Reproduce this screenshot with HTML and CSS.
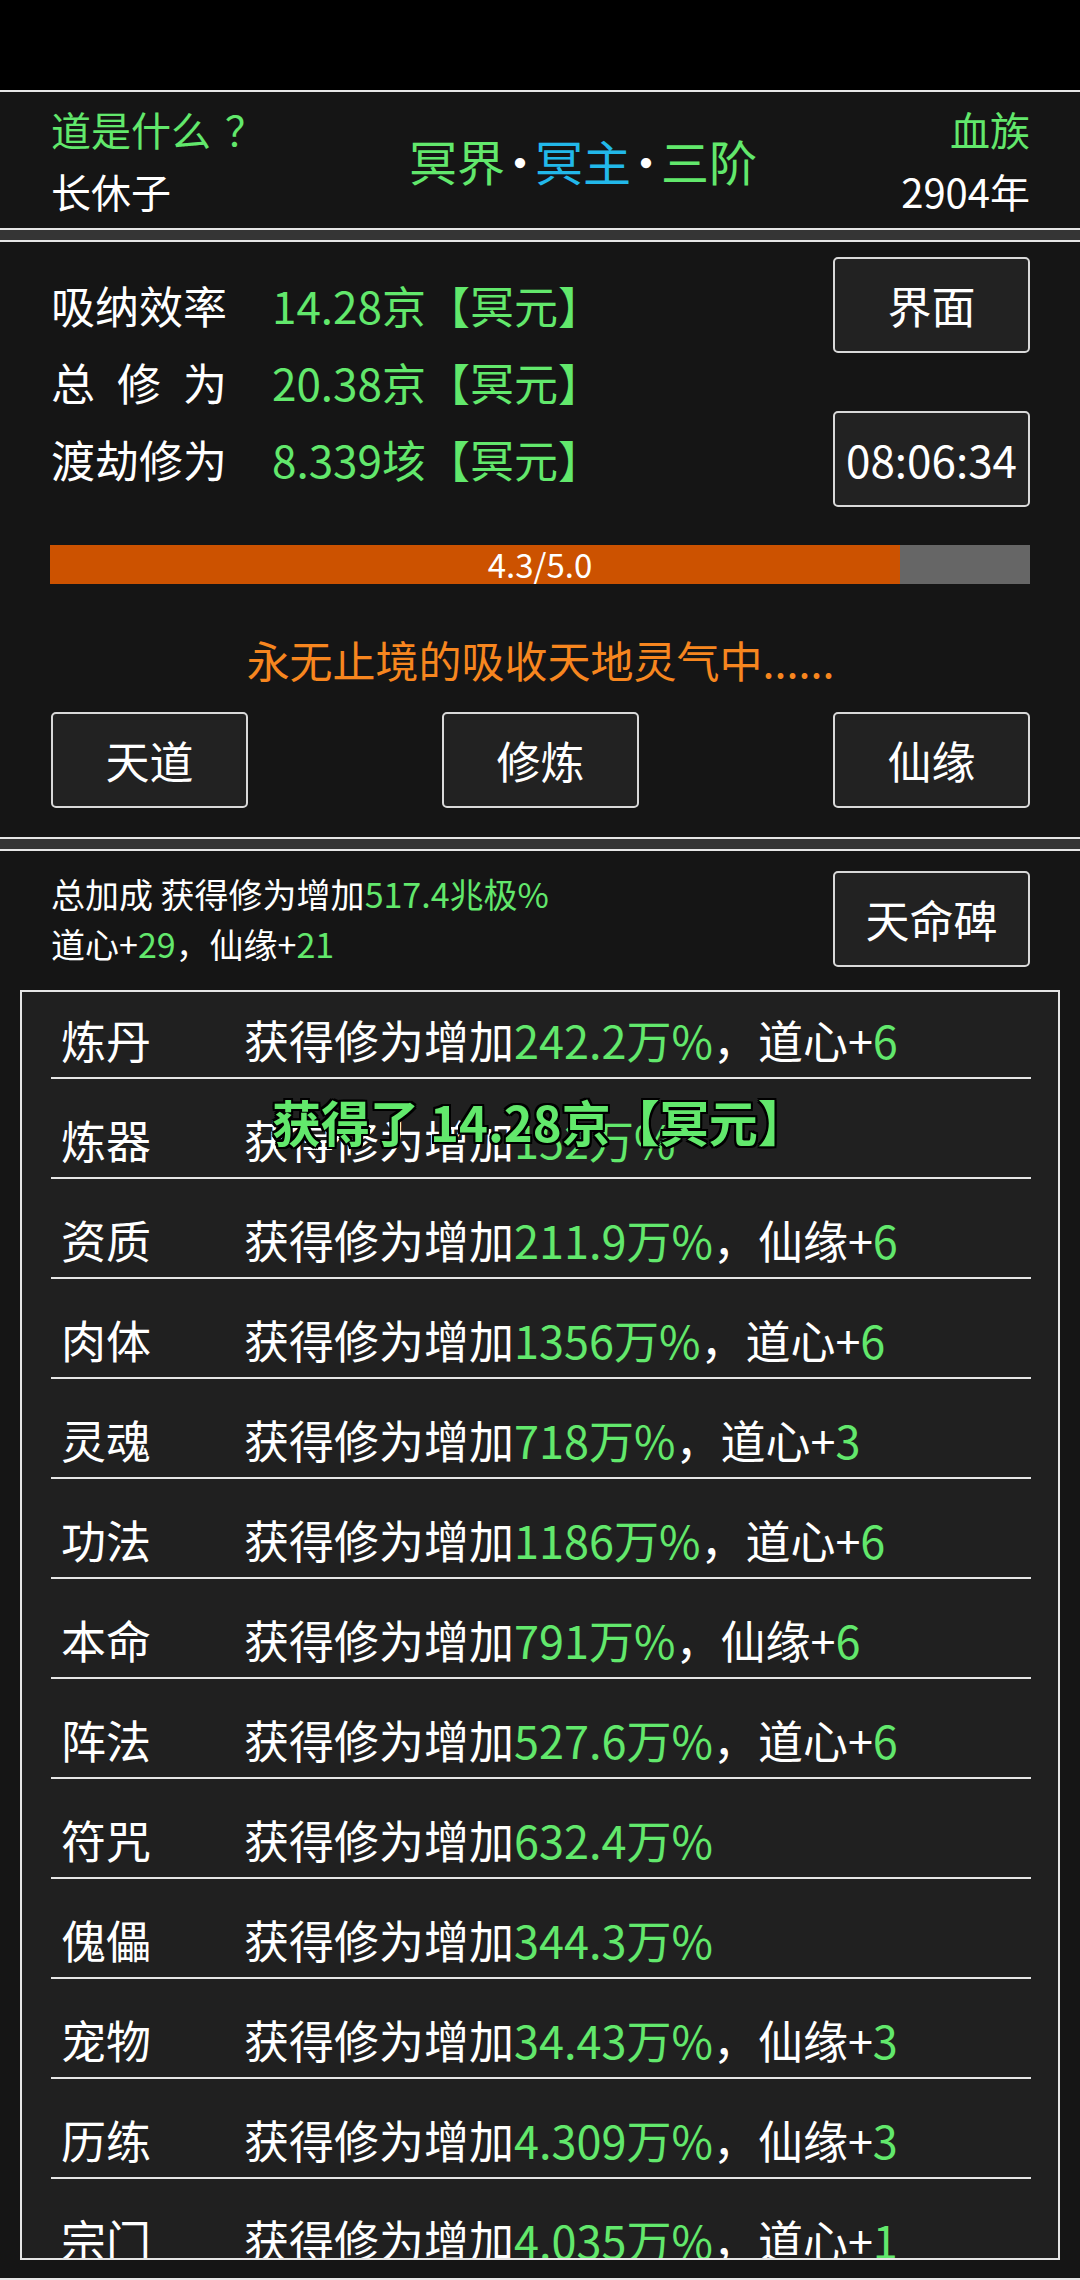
FILE: index.html
```html
<!DOCTYPE html>
<html lang="zh-CN">
<head>
<meta charset="utf-8">
<title>修仙</title>
<link rel="stylesheet" href="styles.css">
</head>
<body>
<div class="screen">
  <div class="statusbar"></div>

  <section class="panel header">
    <div class="h-side h-left">
      <div class="green">道是什么<span class="fw">？</span></div>
      <div>长休子</div>
    </div>
    <div class="h-title">
      <span class="green">冥界</span><span class="dot">·</span><span class="cyan">冥主</span><span class="dot">·</span><span class="green">三阶</span>
    </div>
    <div class="h-side h-right">
      <div class="green">血族</div>
      <div>2904年</div>
    </div>
  </section>

  <section class="panel main">
    <div class="stats-row">
      <div class="stats">
        <div class="stat"><span class="label">吸纳效率</span><span class="green">14.28京【冥元】</span></div>
        <div class="stat"><span class="label spaced">总修为</span><span class="green">20.38京【冥元】</span></div>
        <div class="stat"><span class="label">渡劫修为</span><span class="green">8.339垓【冥元】</span></div>
      </div>
      <div class="side-btns">
        <button class="btn">界面</button>
        <button class="btn">08:06:34</button>
      </div>
    </div>
    <div class="bar">
      <div class="bar-fill" style="width:86.7%"></div>
      <span class="bar-text">4.3/5.0</span>
    </div>
    <div class="status">永无止境的吸收天地灵气中......</div>
    <div class="actions">
      <button class="btn">天道</button>
      <button class="btn">修炼</button>
      <button class="btn">仙缘</button>
    </div>
  </section>

  <section class="panel bonus">
    <div class="bonus-top">
      <div class="bonus-text">
        <div>总加成 获得修为增加<span class="green">517.4兆极%</span></div>
        <div>道心+<span class="green">29</span>，仙缘+<span class="green">21</span></div>
      </div>
      <button class="btn">天命碑</button>
    </div>
    <div class="list">
      <div class="list-inner">
        <div class="row"><span class="row-label">炼丹</span><span>获得修为增加<span class="green">242.2万%</span>，道心+<span class="green">6</span></span></div>
        <div class="row"><span class="row-label">炼器</span><span>获得修为增加<span class="green">152万%</span></span></div>
        <div class="row"><span class="row-label">资质</span><span>获得修为增加<span class="green">211.9万%</span>，仙缘+<span class="green">6</span></span></div>
        <div class="row"><span class="row-label">肉体</span><span>获得修为增加<span class="green">1356万%</span>，道心+<span class="green">6</span></span></div>
        <div class="row"><span class="row-label">灵魂</span><span>获得修为增加<span class="green">718万%</span>，道心+<span class="green">3</span></span></div>
        <div class="row"><span class="row-label">功法</span><span>获得修为增加<span class="green">1186万%</span>，道心+<span class="green">6</span></span></div>
        <div class="row"><span class="row-label">本命</span><span>获得修为增加<span class="green">791万%</span>，仙缘+<span class="green">6</span></span></div>
        <div class="row"><span class="row-label">阵法</span><span>获得修为增加<span class="green">527.6万%</span>，道心+<span class="green">6</span></span></div>
        <div class="row"><span class="row-label">符咒</span><span>获得修为增加<span class="green">632.4万%</span></span></div>
        <div class="row"><span class="row-label">傀儡</span><span>获得修为增加<span class="green">344.3万%</span></span></div>
        <div class="row"><span class="row-label">宠物</span><span>获得修为增加<span class="green">34.43万%</span>，仙缘+<span class="green">3</span></span></div>
        <div class="row"><span class="row-label">历练</span><span>获得修为增加<span class="green">4.309万%</span>，仙缘+<span class="green">3</span></span></div>
        <div class="row"><span class="row-label">宗门</span><span>获得修为增加<span class="green">4.035万%</span>，道心+<span class="green">1</span></span></div>
      </div>
    </div>
  </section>

  <div class="toast">获得了 14.28京【冥元】</div>
</div>
</body>
</html>
```

FILE: styles.css
```css
html, body {
  margin: 0;
  padding: 0;
  background: #000;
}

body {
  font-family: "Noto Sans CJK SC", "Noto Sans", sans-serif;
  color: #fff;
}

.screen {
  position: relative;
  width: 1080px;
  height: 2280px;
  display: flex;
  flex-direction: column;
  gap: 10px;
  background: #353535;
  overflow: hidden;
}

.statusbar {
  height: 90px;
  flex: none;
  background: #000;
  margin-bottom: -10px;
}

.panel {
  background: #151515;
  border-top: 2px solid #e6e6e6;
  border-bottom: 2px solid #e6e6e6;
  flex: none;
}

.green { color: #62e86c; }
.cyan { color: #22b8ea; }

.fw {
  margin-left: 14px;
}

/* header */
.header {
  height: 136px;
  display: flex;
  align-items: center;
  padding: 0 50px 0 51px;
}

.h-side {
  font-size: 40px;
  line-height: 62px;
  white-space: nowrap;
}

.h-right { text-align: right; }

.h-title {
  flex: 1;
  text-align: center;
  font-size: 48px;
  line-height: 60px;
  white-space: nowrap;
}

.dot {
  color: #fff;
  margin: 0 -9px;
}

/* main panel */
.main {
  padding: 15px 50px 0 51px;
  box-sizing: content-box;
  height: 580px;
}

.stats-row {
  display: flex;
  justify-content: space-between;
  height: 250px;
}

.stats {
  padding-top: 10px;
}

.stat {
  font-size: 44px;
  line-height: 77px;
  white-space: nowrap;
  display: flex;
}

.label {
  width: 176px;
  margin-right: 45px;
  flex: none;
}

.label.spaced {
  letter-spacing: 22px;
}

.side-btns {
  display: flex;
  flex-direction: column;
  justify-content: space-between;
}

.btn {
  font: inherit;
  font-size: 44px;
  color: #fff;
  background: #222;
  border: 2px solid #d9d9d9;
  border-radius: 5px;
  width: 197px;
  height: 96px;
  padding: 0;
  line-height: 1;
  box-sizing: border-box;
  cursor: pointer;
}

.bar {
  position: relative;
  margin-top: 38px;
  margin-left: -1px;
  height: 39px;
  background: #666;
  overflow: hidden;
}

.bar-fill {
  height: 100%;
  background: #cc5200;
}

.bar-text {
  position: absolute;
  inset: 0;
  text-align: center;
  font-size: 33px;
  line-height: 39px;
  color: #fff;
}

.status {
  margin-top: 45px;
  text-align: center;
  font-size: 43px;
  line-height: 60px;
  color: #f7861f;
  white-space: nowrap;
}

.actions {
  margin-top: 23px;
  display: flex;
  justify-content: space-between;
}

/* bonus panel */
.bonus {
  flex: 1;
  min-height: 0;
  display: flex;
  flex-direction: column;
  padding: 20px 20px 18px 20px;
}

.bonus-top {
  display: flex;
  justify-content: space-between;
  align-items: center;
  height: 95px;
  padding: 0 30px 0 31px;
  flex: none;
}

.bonus-text {
  font-size: 34px;
  line-height: 50px;
  white-space: nowrap;
}

.list {
  margin-top: 24px;
  flex: 1;
  min-height: 0;
  background: #202020;
  border: 2px solid #e6e6e6;
  overflow: hidden;
}

.list-inner {
  margin-top: -13px;
  padding: 0 27px 0 29px;
}

.row {
  display: flex;
  height: 100px;
  box-sizing: border-box;
  border-bottom: 2px solid #e6e6e6;
  font-size: 45px;
  line-height: 60px;
  padding-top: 31px;
  white-space: nowrap;
}

.row-label {
  width: 193px;
  padding-left: 10px;
  box-sizing: border-box;
  flex: none;
}

/* toast overlay */
.toast {
  position: absolute;
  left: 272px;
  top: 1091px;
  font-size: 49px;
  line-height: 60px;
  font-weight: 700;
  color: #62e86c;
  white-space: nowrap;
  text-shadow:
    -2px -2px 0 #000, 2px -2px 0 #000, -2px 2px 0 #000, 2px 2px 0 #000,
    0 -2px 0 #000, 0 2px 0 #000, -2px 0 0 #000, 2px 0 0 #000;
}
```
